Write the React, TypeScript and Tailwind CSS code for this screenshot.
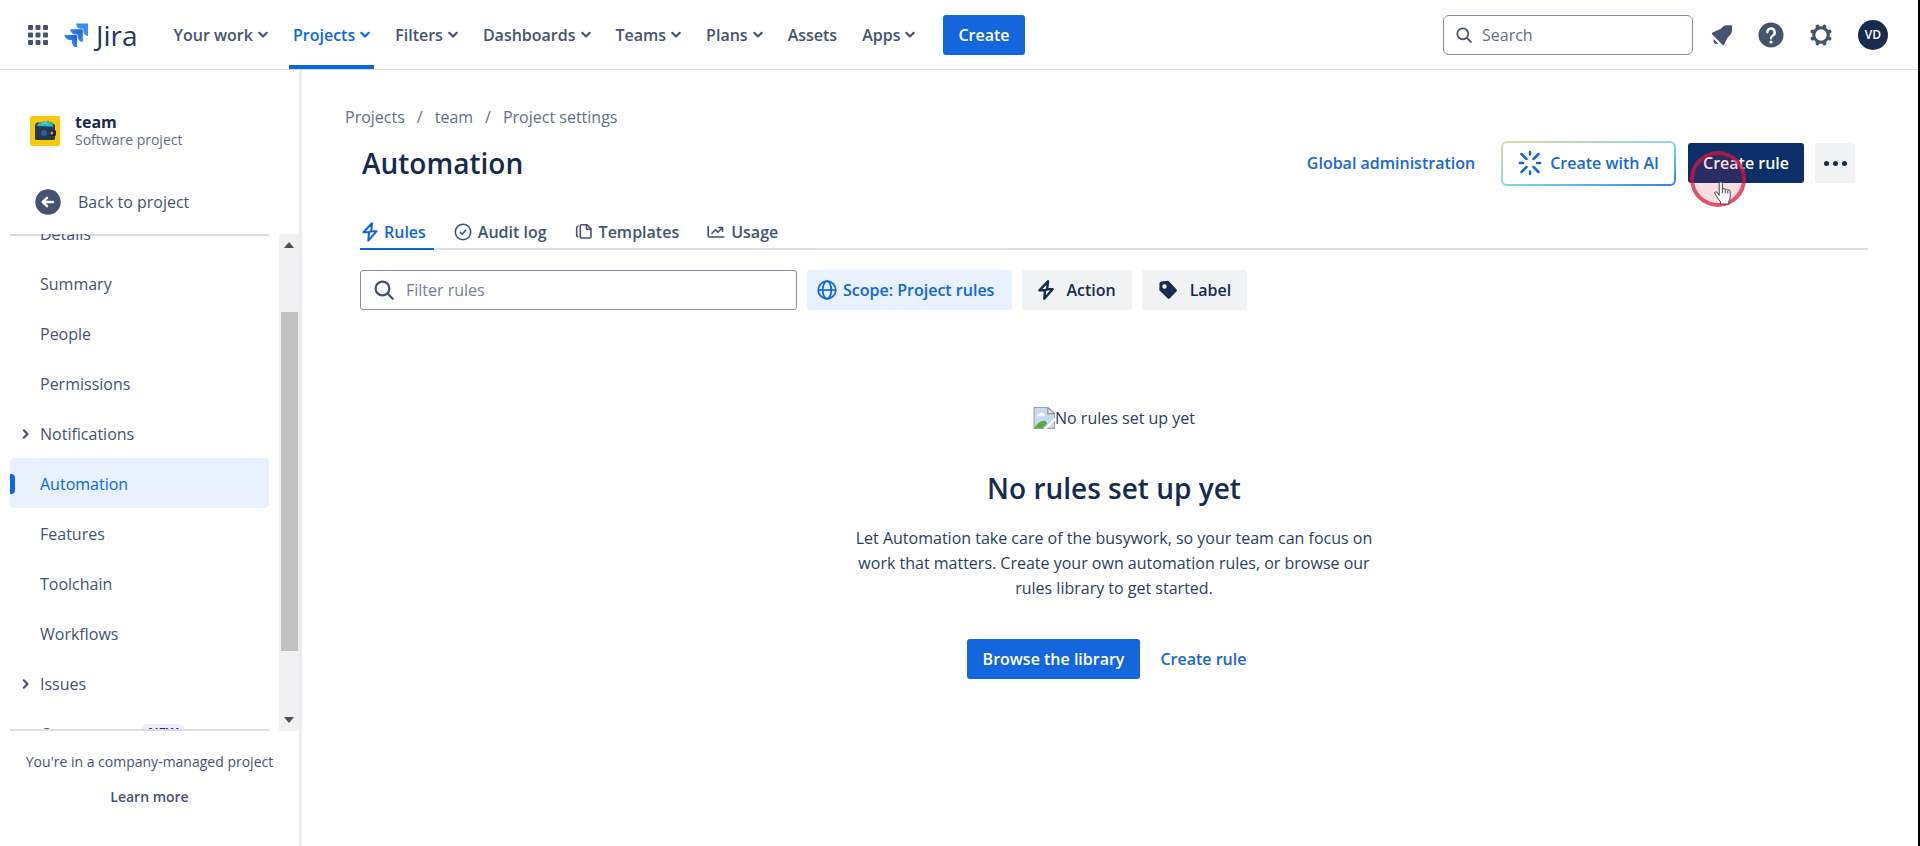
import { useState } from "react";
import type { ReactNode } from "react";
import clsx from "clsx";

const navItems = [
  { label: "Your work", menu: true },
  { label: "Projects", menu: true, active: true },
  { label: "Filters", menu: true },
  { label: "Dashboards", menu: true },
  { label: "Teams", menu: true },
  { label: "Plans", menu: true },
  { label: "Assets" },
  { label: "Apps", menu: true },
];

const sideItems = [
  { label: "Details" },
  { label: "Summary" },
  { label: "People" },
  { label: "Permissions" },
  { label: "Notifications", expandable: true },
  { label: "Automation", active: true },
  { label: "Features" },
  { label: "Toolchain" },
  { label: "Workflows" },
  { label: "Issues", expandable: true },
  { label: "Components", badge: "NEW" },
];

const tabs = [
  { label: "Rules", icon: <BoltOutline />, active: true },
  { label: "Audit log", icon: <CheckCircle /> },
  { label: "Templates", icon: <CopyIcon /> },
  { label: "Usage", icon: <ChartIcon /> },
];

function Chevron({ className }: { className?: string }) {
  return (
    <svg viewBox="0 0 10 8" className={clsx("h-2 w-2.5 shrink-0", className)} fill="none">
      <path d="M1.3 1.8 5 5.5l3.7-3.7" stroke="currentColor" strokeWidth="2.2" strokeLinecap="round" strokeLinejoin="round" />
    </svg>
  );
}

function JiraMark() {
  return (
    <svg viewBox="0 0 24 24" className="h-6 w-6">
      <defs>
        <linearGradient id="jira-a" x1="1" y1="0" x2="0.3" y2="0.7">
          <stop offset="0.2" stopColor="#1d66db" />
          <stop offset="1" stopColor="#388bff" />
        </linearGradient>
      </defs>
      <path d="M23.5.5H12a5.2 5.2 0 0 0 5.2 5.2h2.1v2a5.2 5.2 0 0 0 5.2 5.2V1.500a1 1 0 0 0-1-1z" fill="#388bff" />
      <path d="M17.8 6.2H6.3a5.2 5.2 0 0 0 5.2 5.2h2.1v2.1a5.2 5.2 0 0 0 5.2 5.2V7.200a1 1 0 0 0-1-1z" fill="url(#jira-a)" />
      <path d="M12.1 11.9H.6a5.2 5.2 0 0 0 5.2 5.2h2.1v2.1a5.2 5.2 0 0 0 5.2 5.2V12.900a1 1 0 0 0-1-1z" fill="url(#jira-a)" />
    </svg>
  );
}

function GridIcon() {
  return (
    <svg viewBox="0 0 20 20" className="h-5 w-5" fill="currentColor">
      {[0, 7.5, 15].map((y) =>
        [0, 7.5, 15].map((x) => <rect key={`${x}-${y}`} x={x} y={y} width="5" height="5" rx="1" />)
      )}
    </svg>
  );
}

function SearchIcon({ className }: { className?: string }) {
  return (
    <svg viewBox="0 0 20 20" className={className} fill="none" stroke="currentColor" strokeWidth="2.2" strokeLinecap="round">
      <circle cx="8.5" cy="8.5" r="6.9" />
      <path d="m13.8 13.8 4.9 4.9" />
    </svg>
  );
}

function BellIcon() {
  return (
    <svg viewBox="0 0 22 22" className="h-[22px] w-[22px]" fill="currentColor">
      <path d="M20.2 1.2H15.8C12.600 1.200 11.300 3.200 9.500 5L1.600 8.600c-.8.4-.9 1.1-.4 1.6l10.200 10.500c.6.6 1.300.5 1.700-.2L17 13c2.700-2 4-4.200 4-7.300V2c0-.5-.3-.8-.8-.8z" />
      <path d="M2.900 15.200a3.100 3.100 0 0 0 4.300 4.300z" />
    </svg>
  );
}

function HelpIcon() {
  return (
    <svg viewBox="0 0 26 26" className="h-[26px] w-[26px]">
      <circle cx="13" cy="13" r="12.5" fill="currentColor" />
      <path d="M9.3 10.3a3.7 3.7 0 1 1 5.5 3.2c-1.2.7-1.8 1.3-1.8 2.7" fill="none" stroke="#fff" strokeWidth="2.4" strokeLinecap="round" />
      <circle cx="13" cy="20" r="1.6" fill="#fff" />
    </svg>
  );
}

function GearIcon() {
  return (
    <svg viewBox="0 0 24 24" className="h-6 w-6" fill="none" stroke="currentColor">
      <circle cx="12" cy="12" r="7.2" strokeWidth="3" />
      {[22.5, 67.5, 112.5, 157.5, 202.5, 247.5, 292.5, 337.5].map((a) => (
        <path key={a} d="M12 4.200V2.700" strokeWidth="3.8" strokeLinecap="round" transform={`rotate(${a} 12 12)`} />
      ))}
    </svg>
  );
}

function WalletIcon() {
  return (
    <svg viewBox="0 0 30 30" className="h-[30px] w-[30px] shrink-0">
      <rect width="30" height="30" rx="2" fill="#f8cb0a" />
      <path d="M5 8.5 7 6.5h15l2 2z" fill="#1d3557" />
      <rect x="5" y="8" width="20" height="16" rx="1.5" fill="#253858" />
      <path d="M6.500 10 9 6.800l3-.3 1.500-1.500 3 .5 1.500-1.300 2 1.800 2.500.8 1 4z" fill="#2fb5c4" />
      <path d="M12 8.500 15 6.500l2.500 1.500" fill="none" stroke="#7fdde2" />
      <circle cx="14" cy="17" r="3" fill="#2c5f93" />
      <rect x="19.5" y="14" width="6.5" height="6" rx="1.5" fill="#16243d" />
      <circle cx="21.8" cy="17" r="1.5" fill="#f79233" />
    </svg>
  );
}

function BackIcon() {
  return (
    <svg viewBox="0 0 26 26" className="h-[26px] w-[26px] shrink-0">
      <circle cx="13" cy="13" r="12.7" fill="currentColor" />
      <path d="M18 13H8.300M12 8.800 7.800 13l4.200 4.200" fill="none" stroke="#fff" strokeWidth="2.5" strokeLinecap="round" strokeLinejoin="round" />
    </svg>
  );
}

function BoltOutline({ strokeWidth = 2 }: { strokeWidth?: number }) {
  return (
    <svg viewBox="0 0 16 20" className="h-5 w-4" fill="none" stroke="currentColor" strokeWidth={strokeWidth} strokeLinejoin="round">
      <path d="M10 1.300 1.400 10.300H7L6.300 18.700 14.600 9.200H9.200z" />
      <path d="M7 10.300l2.200-1.100" />
    </svg>
  );
}

function CheckCircle() {
  return (
    <svg viewBox="0 0 18 18" className="h-[18px] w-[18px]" fill="none" stroke="currentColor" strokeWidth="1.6" strokeLinecap="round" strokeLinejoin="round">
      <circle cx="9" cy="9" r="7.7" />
      <path d="m6.200 9.200 2 2 3.600-4" />
    </svg>
  );
}

function CopyIcon() {
  return (
    <svg viewBox="0 0 18 18" className="h-[18px] w-[18px]" fill="none" stroke="currentColor" strokeWidth="1.6" strokeLinecap="round" strokeLinejoin="round">
      <path d="M6.500 1.700h5.300L16 5.900v7.900c0 .7-.5 1.200-1.200 1.200H6.500c-.7 0-1.200-.5-1.200-1.200V2.900c0-.7.500-1.200 1.200-1.200z" />
      <path d="M11.500 2v4.200h4.200M2.800 3.200C2 3.500 1.700 4 1.700 4.800v7.400c0 .8.300 1.300 1.100 1.600" />
    </svg>
  );
}

function ChartIcon() {
  return (
    <svg viewBox="0 0 18 18" className="h-[18px] w-[18px]" fill="none" stroke="currentColor" strokeWidth="1.6" strokeLinecap="round" strokeLinejoin="round">
      <path d="M1.200 3.500v9.300c0 .7.500 1.200 1.200 1.200h14.400" />
      <path d="m5 10.200 3.300-3.400 2.600 2.400 4.400-4.400M11.800 4.500h3.700v3.700" />
    </svg>
  );
}

function GlobeIcon() {
  return (
    <svg viewBox="0 0 20 20" className="h-5 w-5" fill="none" stroke="currentColor" strokeWidth="1.7">
      <circle cx="10" cy="10" r="8.8" />
      <ellipse cx="10" cy="10" rx="4.3" ry="8.8" />
      <path d="M1.5 10h17" />
    </svg>
  );
}

function TagIcon() {
  return (
    <svg viewBox="0 0 20 20" className="h-5 w-5" fill="currentColor">
      <path fillRule="evenodd" d="M3.500 1.500 9.700.8c.5 0 .9.1 1.200.5l7.700 8.200c.5.5.5 1.200 0 1.700l-7 7.300c-.5.5-1.200.5-1.700 0L1.800 10.800c-.3-.3-.5-.7-.5-1.200L1.500 3.500c0-1.100.9-2 2-2zM6.500 4.300a2.200 2.200 0 1 0 0 4.400 2.200 2.200 0 0 0 0-4.400z" />
    </svg>
  );
}

function SparkIcon() {
  return (
    <svg viewBox="0 0 24 26" className="h-[26px] w-6" fill="none" stroke="currentColor" strokeWidth="2.5" strokeLinecap="round">
      <path d="M12 2v2.500M12 21.500V24M1.800 13H5M19 13h3.200M3.500 4 8.500 9M20.500 4l-5 5M3.500 22 8.500 17M20.500 22l-5-5" />
    </svg>
  );
}

function BrokenImage() {
  return (
    <svg viewBox="0 0 20 20" className="h-[22px] w-[22px] shrink-0">
      <path d="M1 .5h12.500L19.500 6v13.500H1z" fill="#c6d9f5" stroke="#a0a0a0" />
      <path d="M3.500 8.500c0-1.800 1.400-2.500 2.500-2.200C6.500 4.500 9.500 4.700 9.700 6.700c1.500 0 1.500 1.800.3 1.800z" fill="#fff" />
      <path d="M1.500 19c2-4 5.500-7 8.500-6.500 1.500.2 2.500 1.500 3 2.500l-4 4z" fill="#56ad3f" />
      <path d="M13.500.5V6h6z" fill="#f4f4f4" stroke="#8d8d8d" />
      <path d="M20 9.500 9.500 20h3L20 12.500z" fill="#fff" />
    </svg>
  );
}

function HandCursor() {
  return (
    <svg viewBox="0 0 17 24" className="h-6 w-[17px]">
      <path
        d="M5.200 14.500V2.500a1.600 1.600 0 0 1 3.200 0v6c.3-1.400 2.700-1.300 2.800.3.500-1.100 2.500-.8 2.600.6.700-.8 2.400-.3 2.400 1.200v5.200c0 2-.7 3-1.400 4.400V23H6.500v-2.300C5 19 3.500 17 2.500 15.200L.9 12.600c-.6-1.300 1-2.500 2.200-1.300z"
        fill="#fff"
        stroke="#444"
        strokeWidth="1"
        strokeLinejoin="round"
      />
      <path d="M8.400 8.500v3.700M11.200 9v3.400M13.800 9.700v3" stroke="#444" />
    </svg>
  );
}

function TopNav() {
  return (
    <header className="flex h-[70px] shrink-0 items-center border-b border-[#d9dadd] pr-[30px] pl-7 text-[#44546f]">
      <button aria-label="Switch to">
        <GridIcon />
      </button>
      <a href="#home" className="ml-4 flex items-center gap-2 text-[28px] leading-8 font-medium text-[#253858]">
        <JiraMark />
        Jira
      </a>
      <nav className="ml-8 flex h-full gap-[17px] font-semibold">
        {navItems.map((item) => (
          <button
            key={item.label}
            className={clsx(
              "flex h-full items-center gap-[5px] border-b-4 px-1 pt-1",
              item.active ? "border-[#0c66e4] text-[#0c66e4]" : "border-transparent"
            )}
          >
            <span>{item.label}</span>
            {item.menu && <Chevron />}
          </button>
        ))}
      </nav>
      <button className="ml-6 h-10 rounded-[3px] bg-[#1366dc] px-[15px] font-semibold text-white">Create</button>

      <label className="ml-auto flex h-10 w-[250px] items-center gap-2.5 rounded-md border border-[#8590a2] px-3">
        <SearchIcon className="h-4 w-4 shrink-0" />
        <input type="text" placeholder="Search" aria-label="Search" className="w-full min-w-0 outline-none placeholder:text-[#626f86]" />
      </label>
      <div className="ml-[18px] flex items-center gap-[25px]">
        <button aria-label="Notifications"><BellIcon /></button>
        <button aria-label="Help"><HelpIcon /></button>
        <button aria-label="Settings"><GearIcon /></button>
        <button className="h-[30px] w-[30px] rounded-full bg-[#172b4d] text-xs font-semibold text-white">VD</button>
      </div>
    </header>
  );
}

function Sidebar() {
  return (
    <aside className="flex w-[302px] shrink-0 flex-col border-r-3 border-[#ebecee] text-[#44546f]">
      <div className="flex h-[98px] items-center gap-[15px] pt-6 pl-[30px]">
        <WalletIcon />
        <div>
          <p className="leading-[18px] font-bold text-[#172b4d]">team</p>
          <p className="text-sm leading-[18px] text-[#626f86]">Software project</p>
        </div>
      </div>
      <a href="#project" className="mt-1 mb-0.5 flex h-[60px] items-center gap-[17px] pl-[35px]">
        <BackIcon />
        Back to project
      </a>

      <div className="flex min-h-0 flex-1">
        <div className="flex min-w-0 flex-1 flex-col overflow-hidden pl-2.5">
          <div className="-mb-0.5 h-0.5 shrink-0 bg-[#dcdee2]" />
          <nav className="min-h-0 flex-1 overflow-hidden">
            <ul className="-mt-[26px]">
              {sideItems.map((item) => (
                <li key={item.label}>
                  <a
                    href={`#${item.label.toLowerCase()}`}
                    className={clsx(
                      "flex h-[50px] items-center rounded pt-0.5",
                      item.active && "bg-[#e9f0fe] text-[#0c66e4]"
                    )}
                  >
                    <span className={clsx("h-5 w-[5px] rounded-r", item.active && "bg-[#0c66e4]")} />
                    <span className="flex w-[25px] items-center pl-1.5">
                      {item.expandable && <Chevron className="-rotate-90" />}
                    </span>
                    {item.label}
                    {item.badge && (
                      <span className="ml-1.5 rounded bg-[#eeedfd] px-1.5 pb-1 text-[13px] leading-4 font-bold text-[#352c63]">{item.badge}</span>
                    )}
                  </a>
                </li>
              ))}
            </ul>
          </nav>
          <div className="-mt-0.5 h-0.5 shrink-0 bg-[#dcdee2]" />
        </div>
        {/* Scroll track */}
        <div className="ml-2.5 flex w-5 flex-col items-center justify-between bg-[#f1f1f3] py-2">
          <svg viewBox="0 0 10 6" className="h-1.5 w-2.5"><path d="M0 6 5 0l5 6z" fill="#505050" /></svg>
          <div className="flex w-[17px] flex-1 flex-col py-1">
            <div className="basis-[60px]" />
            <div className="h-[339px] bg-[#c1c1c1]" />
          </div>
          <svg viewBox="0 0 10 6" className="h-1.5 w-2.5"><path d="M0 0h10L5 6z" fill="#505050" /></svg>
        </div>
      </div>

      <div className="flex h-[115px] flex-col items-center gap-[15px] pt-[21px] text-sm leading-5">
        <p>You're in a company-managed project</p>
        <a href="#learn-more" className="font-semibold">Learn more</a>
      </div>
    </aside>
  );
}

function FilterButton({ icon, label }: { icon: ReactNode; label: string }) {
  return (
    <button className="flex h-10 items-center gap-3 rounded-[3px] bg-[#f1f2f4] px-4 font-semibold text-[#172b4d]">
      {icon}
      {label}
    </button>
  );
}

function PageHeader() {
  return (
    <>
      <nav aria-label="Breadcrumb" className="-ml-[15px] flex gap-3 leading-6 text-[#626f86]">
        <a href="#projects">Projects</a>
        <span>/</span>
        <a href="#team">team</a>
        <span>/</span>
        <a href="#settings">Project settings</a>
      </nav>
      <div className="mt-2.5 flex items-center pr-[13px]">
        <h1 className="pl-0.5 text-[28px] leading-[48px] font-semibold text-[#172b4d]">Automation</h1>
        <a href="#global" className="ml-auto font-semibold text-[#1a66d6]">Global administration</a>
        <button className="ml-[26px] h-[45px] rounded-md bg-linear-to-br from-[#ded79a] via-[#8fd5dc] to-[#357de8] p-0.5 font-semibold text-[#1a66d6]">
          <span className="flex h-full items-center gap-2 rounded bg-white px-[15px]">
            <SparkIcon />
            Create with AI
          </span>
        </button>
        <div className="relative ml-3">
          <button className="h-10 rounded-[3px] bg-[#0c2f69] px-[15px] font-semibold text-white">Create rule</button>
          <span className="pointer-events-none absolute top-2 left-0.5 h-[56px] w-[56px] rounded-full border-4 border-[#e0143c]/70 bg-[#d01f3c]/15" />
          <span className="pointer-events-none absolute top-[38px] left-[26px]">
            <HandCursor />
          </span>
        </div>
        <button aria-label="More actions" className="ml-[11px] flex h-10 w-10 items-center justify-center gap-1 rounded-[3px] bg-[#f1f2f4]">
          {[0, 1, 2].map((n) => (
            <span key={n} className="h-[5px] w-[5px] rounded-full bg-[#172b4d]" />
          ))}
        </button>
      </div>
    </>
  );
}

function EmptyState() {
  return (
    <section className="mt-[93px] flex flex-col items-center text-center text-[#2c3e5d]">
      <div className="flex h-[30px] items-center">
        <BrokenImage />
        <span>No rules set up yet</span>
      </div>
      <h2 className="mt-[35px] text-[28px] leading-10 font-semibold text-[#172b4d]">No rules set up yet</h2>
      <p className="mt-[18px] max-w-[545px] leading-[25px]">
        Let Automation take care of the busywork, so your team can focus on
        work that matters. Create your own automation rules, or browse our
        rules library to get started.
      </p>
      <div className="mt-[38px] flex items-center gap-[5px] font-semibold">
        <button className="h-10 rounded-[3px] bg-[#1366dc] px-4 text-white">Browse the library</button>
        <button className="h-10 px-[15px] text-[#1a66d6]">Create rule</button>
      </div>
    </section>
  );
}

export default function App() {
  const [filter, setFilter] = useState("");

  return (
    <div className="flex h-screen min-h-[600px] flex-col border-r-2 border-black bg-white font-['Open_Sans','Noto_Sans',sans-serif] text-base">
      <TopNav />
      <div className="flex min-h-0 flex-1">
        <Sidebar />
        <main className="min-w-0 flex-1 overflow-hidden pt-[35px] pr-[50px] pl-[58px]">
          <PageHeader />

          {/* Tabs */}
          <div className="mt-[30px] flex gap-[18px] border-b-2 border-[#dfe0e3] font-semibold text-[#44546f]">
            {tabs.map((tab) => (
              <button
                key={tab.label}
                className={clsx(
                  "-mb-0.5 flex h-[33px] items-center gap-1.5 border-b-2 pr-2 pb-0.5 pl-0.5",
                  tab.active ? "border-[#0c66e4] text-[#0c66e4]" : "border-transparent"
                )}
              >
                {tab.icon}
                {tab.label}
              </button>
            ))}
          </div>

          {/* Filters */}
          <div className="mt-5 flex gap-2.5">
            <label className="flex h-10 w-[437px] items-center gap-3 rounded-[3px] border border-[#8590a2] px-[13px] text-[#44546f]">
              <SearchIcon className="h-5 w-5 shrink-0" />
              <input
                type="text"
                value={filter}
                onChange={(e) => setFilter(e.target.value)}
                placeholder="Filter rules"
                aria-label="Filter rules"
                className="w-full min-w-0 outline-none placeholder:text-[#758195]"
              />
            </label>
            <button className="flex h-10 items-center gap-1.5 rounded-[3px] bg-[#e9f0fe] pr-[18px] pl-2.5 font-semibold text-[#0c66e4]">
              <GlobeIcon />
              Scope: Project rules
            </button>
            <FilterButton icon={<BoltOutline strokeWidth={2.4} />} label="Action" />
            <FilterButton icon={<TagIcon />} label="Label" />
          </div>

          <EmptyState />
        </main>
      </div>
    </div>
  );
}
